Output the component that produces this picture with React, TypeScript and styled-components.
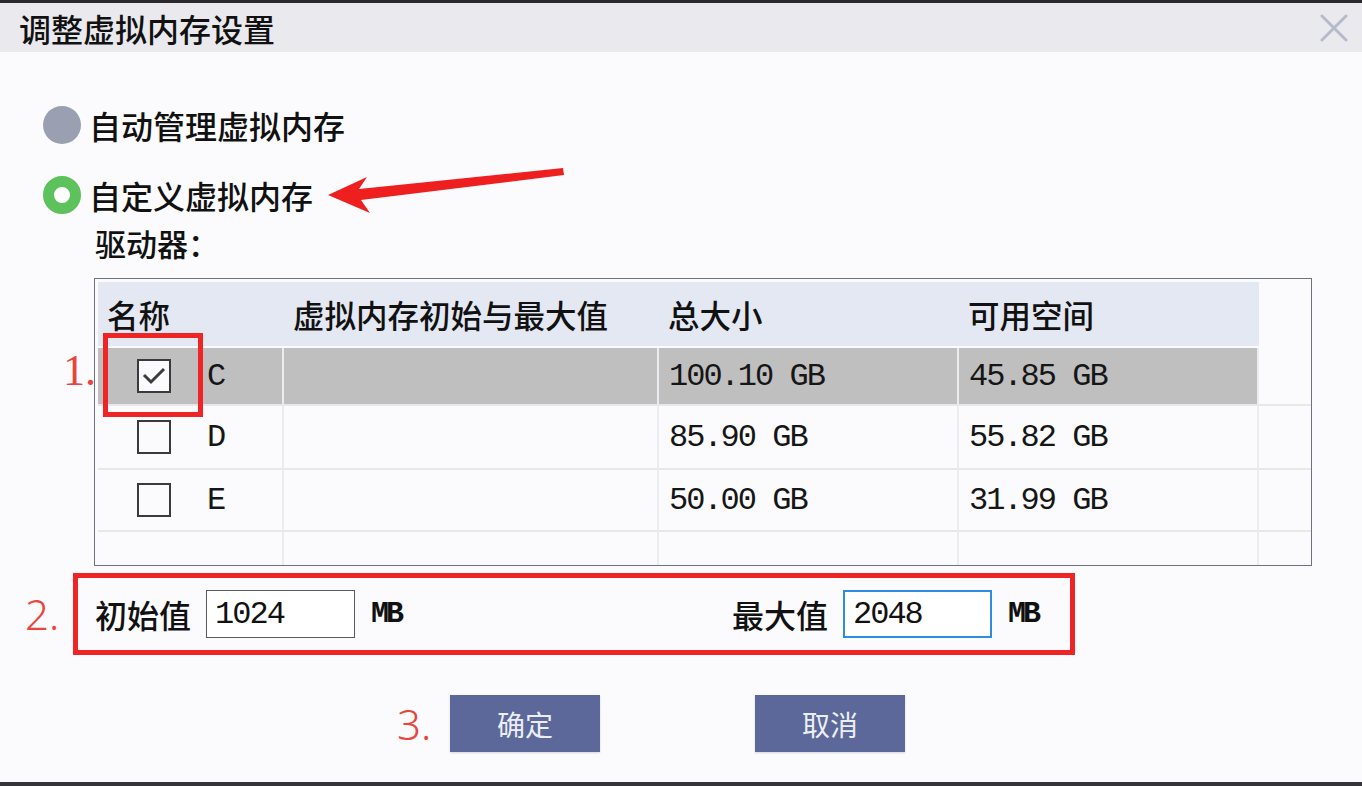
import styled, { createGlobalStyle } from "styled-components"

const GlobalStyle = createGlobalStyle`
    html, body {
        margin: 0;
        padding: 0;
        background: #fbfbfd;
        font-family: "Noto Sans CJK SC", "Noto Sans", sans-serif;
        color: #111;
    }
`

type Drive = { name: string; total: string; free: string; checked: boolean }

const drives: Array<Drive> = [
    { name: 'C', total: '100.10 GB', free: '45.85 GB', checked: true },
    { name: 'D', total: '85.90 GB', free: '55.82 GB', checked: false },
    { name: 'E', total: '50.00 GB', free: '31.99 GB', checked: false },
]

const headers: Array<string> = ['名称', '虚拟内存初始与最大值', '总大小', '可用空间', '']

const CheckMark = () => (
    <svg width="30" height="30" viewBox="0 0 30 30">
        <polyline points="5,14 12,21 25,8" fill="none" stroke="#3c3c3c" strokeWidth="3" />
    </svg>
)

const CloseIcon = () => (
    <svg width="28" height="28" viewBox="0 0 28 28">
        <path d="M2 2 L26 26 M26 2 L2 26" stroke="#b6bacb" strokeWidth="3" strokeLinecap="round" />
    </svg>
)

const Arrow = () => (
    <ArrowSvg width="244" height="50" viewBox="0 0 244 50">
        <polygon points="3,30 42,12 34,24 238,3 239,10 36,35 45,48" fill="#ee1f1f" />
    </ArrowSvg>
)

export default function App() {
    return (
        <>
            <GlobalStyle />
            <Window>
                <TitleBar>
                    <span>调整虚拟内存设置</span>
                    <CloseIcon />
                </TitleBar>

                <RadioRow $top={54}>
                    <Radio $on={false} />
                    <RadioLabel>自动管理虚拟内存</RadioLabel>
                </RadioRow>
                <RadioRow $top={32}>
                    <Radio $on={true} />
                    <RadioLabel>自定义虚拟内存</RadioLabel>
                    <Arrow />
                </RadioRow>
                <DriveLabel>驱动器：</DriveLabel>

                <TableWrap>
                    <Table>
                        {headers.map((h, i) => (
                            <HeadCell key={h + i} $blank={i === 4}>{h}</HeadCell>
                        ))}
                        {drives.map((d) => (
                            <Row key={d.name}>
                                <Cell $selected={d.checked}>
                                    <NameCell>
                                        <Box>{d.checked && <CheckMark />}</Box>
                                        <Mono>{d.name}</Mono>
                                    </NameCell>
                                </Cell>
                                <Cell $selected={d.checked} />
                                <Cell $selected={d.checked}><Mono>{d.total}</Mono></Cell>
                                <Cell $selected={d.checked}><Mono>{d.free}</Mono></Cell>
                                <Cell $last />
                            </Row>
                        ))}
                        <Row>
                            <Cell $tail />
                            <Cell $tail />
                            <Cell $tail />
                            <Cell $tail />
                            <Cell $tail $last />
                        </Row>
                    </Table>
                    <Mark $left={-32} $top={70}>1.</Mark>
                    <Highlight />
                </TableWrap>

                <SizeRow>
                    <StepLabel>2.</StepLabel>
                    <SizeBox>
                        <FieldLabel>初始值</FieldLabel>
                        <Field>1024</Field>
                        <Unit>MB</Unit>
                        <Spacer />
                        <FieldLabel>最大值</FieldLabel>
                        <Field $focused>2048</Field>
                        <Unit>MB</Unit>
                    </SizeBox>
                </SizeRow>

                <ButtonRow>
                    <StepLabel $width={53}>3.</StepLabel>
                    <Button>确定</Button>
                    <Spacer $width={155} />
                    <Button>取消</Button>
                </ButtonRow>
            </Window>
        </>
    )
}

const Window = styled.div`
    width: 1362px;
    height: 786px;
    box-sizing: border-box;
    display: flex;
    flex-direction: column;
    background: #fbfbfd;
    border-top: 3px solid #2a2a2e;
    border-bottom: 4px solid #34343a;
    overflow: hidden;
`
const TitleBar = styled.header`
    height: 49px;
    flex-shrink: 0;
    background: #e9e9ee;
    display: flex;
    align-items: center;
    justify-content: space-between;
    padding: 0 14px 0 19px;
    font-size: 32px;
    font-weight: 500;
    line-height: 1;
    color: #111;
`
const RadioRow = styled.div<{ $top: number }>`
    display: flex;
    align-items: center;
    gap: 8px;
    height: 38px;
    margin: ${({ $top }) => $top}px 0 0 43px;
`
const Radio = styled.span<{ $on: boolean }>`
    width: 38px;
    height: 38px;
    border-radius: 50%;
    box-sizing: border-box;
    flex-shrink: 0;
    background: ${({ $on }) => ($on ? '#fff' : '#9a9fb1')};
    border: ${({ $on }) => ($on ? '11px solid #5dc25b' : 'none')};
`
const RadioLabel = styled.span`
    font-size: 32px;
    font-weight: 500;
    line-height: 38px;
    white-space: nowrap;
`
const ArrowSvg = styled.svg`
    margin-left: 4px;
    margin-top: -10px;
    flex-shrink: 0;
`
const DriveLabel = styled.div`
    margin: 11px 0 0 95px;
    font-size: 31px;
    font-weight: 500;
    line-height: 36px;
`
const TableWrap = styled.div`
    position: relative;
    margin: 17px 0 0 94px;
    width: 1218px;
    height: 288px;
    box-sizing: border-box;
    border: 1px solid #6e727c;
    padding: 3px 0 0 3px;
    background: #fbfbfd;
`
const Table = styled.div`
    display: grid;
    grid-template-columns: 186px 375px 300px 300px 1fr;
    grid-template-rows: 66px 58px 64px 62px 1fr;
    height: 100%;
`
const Row = styled.div`
    display: contents;
`
const HeadCell = styled.div<{ $blank?: boolean }>`
    background: ${({ $blank }) => ($blank ? 'transparent' : '#e4e8f2')};
    border-bottom: 2px solid #fbfbfd;
    display: flex;
    align-items: center;
    padding-left: 9px;
    font-size: 31.5px;
    font-weight: 500;
    white-space: nowrap;
`
const Cell = styled.div<{ $selected?: boolean; $last?: boolean; $tail?: boolean }>`
    display: flex;
    align-items: center;
    padding-left: 10px;
    background: ${({ $selected }) => ($selected ? '#bfbfc0' : 'transparent')};
    border-right: ${({ $last }) => ($last ? 'none' : '2px solid #ebecf0')};
    border-bottom: ${({ $tail }) => ($tail ? 'none' : '2px solid #e7e8ec')};
`
const NameCell = styled.div`
    display: flex;
    align-items: center;
    gap: 36px;
    padding-left: 29px;
`
const Box = styled.span`
    width: 34px;
    height: 34px;
    box-sizing: border-box;
    border: 2px solid #3a3a3a;
    background: #fbfbfd;
    display: flex;
    align-items: center;
    justify-content: center;
`
const Mono = styled.span`
    font-family: "Liberation Mono", "DejaVu Sans Mono", monospace;
    font-size: 32px;
    letter-spacing: -2px;
    color: #161616;
    white-space: pre;
`
const Mark = styled.span<{ $left: number; $top: number }>`
    position: absolute;
    left: ${({ $left }) => $left}px;
    top: ${({ $top }) => $top}px;
    font-family: "Liberation Serif", serif;
    font-size: 44px;
    line-height: 1;
    color: #e8453b;
`
const Highlight = styled.div`
    position: absolute;
    left: 8px;
    top: 54px;
    width: 100px;
    height: 84px;
    box-sizing: border-box;
    border: 5px solid #ef2424;
`
const SizeRow = styled.div`
    display: flex;
    align-items: center;
    margin: 7px 0 0 25px;
`
const StepLabel = styled.span<{ $width?: number }>`
    width: ${({ $width }) => $width ?? 48}px;
    font-family: "Noto Sans", sans-serif;
    font-weight: 300;
    font-size: 42px;
    line-height: 1;
    color: #e8453b;
`
const SizeBox = styled.div`
    width: 1002px;
    height: 82px;
    box-sizing: border-box;
    border: 5px solid #ef2424;
    display: flex;
    align-items: center;
    padding: 0 32px 0 17px;
`
const FieldLabel = styled.span`
    font-size: 32px;
    font-weight: 500;
    line-height: 1;
`
const Field = styled.div<{ $focused?: boolean }>`
    width: 149px;
    height: 48px;
    box-sizing: border-box;
    margin-left: 15px;
    display: flex;
    align-items: center;
    padding-left: 8px;
    background: #fff;
    border: ${({ $focused }) => ($focused ? '2px solid #2e8ce2' : '1.5px solid #5a5a5e')};
    font-family: "Liberation Mono", "DejaVu Sans Mono", monospace;
    font-size: 32px;
    letter-spacing: -2px;
    color: #111;
`
const Unit = styled.span`
    margin-left: 16px;
    font-family: "Liberation Mono", "DejaVu Sans Mono", monospace;
    font-size: 30px;
    font-weight: 700;
    letter-spacing: -3px;
    color: #111;
`
const Spacer = styled.span<{ $width?: number }>`
    flex: ${({ $width }) => ($width ? `0 0 ${$width}px` : '1')};
`
const ButtonRow = styled.div`
    display: flex;
    align-items: center;
    margin: 40px 0 0 397px;
`
const Button = styled.button`
    width: 150px;
    height: 57px;
    border: none;
    background: #5b6899;
    color: #eceef6;
    font-family: "Noto Sans CJK SC", sans-serif;
    font-size: 28px;
    padding: 0;
    box-shadow: 0 1px 2px rgba(0, 0, 0, 0.15);
`
